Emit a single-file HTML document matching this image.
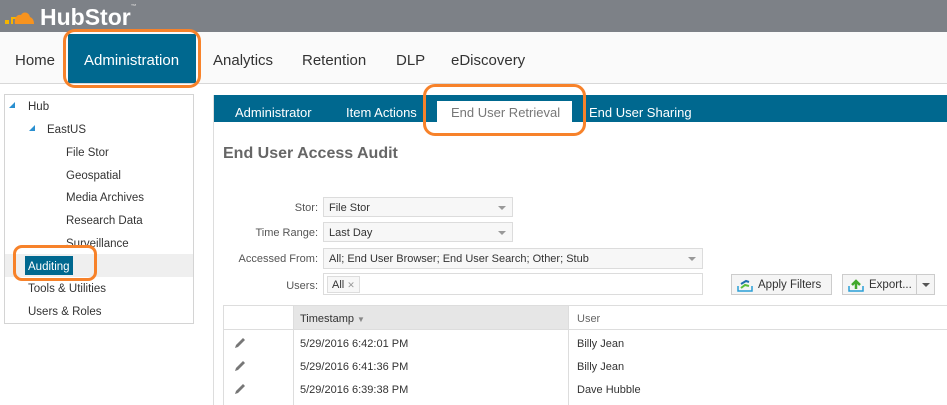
<!DOCTYPE html>
<html><head><meta charset="utf-8"><style>
*{margin:0;padding:0;box-sizing:border-box}
body{width:947px;height:405px;overflow:hidden;background:#fff;font-family:"Liberation Sans",sans-serif;color:#333;position:relative;font-size:11px}
.a{position:absolute;white-space:nowrap}
.top{left:0;top:0;width:947px;height:32px;background:#7d8187}
.nav{left:0;top:32px;width:947px;height:52px;background:#fafafa;border-bottom:1px solid #d8d8d8}
.ni{top:52px;font-size:15px;color:#333}
.tree{left:4px;top:94px;width:190px;height:230px;border:1px solid #d4d4d4}
.ti{font-size:11.5px;color:#333}
.tab{font-size:13px;color:#fff;top:105px}
.lbl{font-size:11px;color:#555;text-align:right;width:120px}
.inp{border:1px solid #dcdcdc;background:#f7f7f7;font-size:11px;padding:4px 5px 2px;color:#333}
.dd{position:absolute;right:6px;top:8px;border:4px solid transparent;border-top:4px solid #999;border-bottom:0}
.btn{border:1px solid #ccc;background:#f5f5f5;font-size:11.5px;color:#333;height:21px}
.row{font-size:11px;color:#333}
</style></head><body>
<div class="a top"></div>
<svg class="a" style="left:4px;top:8px" width="30" height="18" viewBox="0 0 30 18">
<rect x="1" y="12" width="4" height="4" fill="#f5b400"/><path d="M7 16V9h7v2H9v5z" fill="#f5b400"/>
<path d="M11 16 C10 10 13 6 17 7 C19 3 25 4 26 9 C29 10 30 13 30 16 Z" fill="#f7931e"/></svg>
<div class="a" style="left:40px;top:4px;font-size:23px;font-weight:bold;color:#fff">HubStor<span style="font-size:6px;vertical-align:top;color:#ccc">™</span></div>
<div class="a nav"></div>
<div class="a ni" style="left:15px">Home</div>
<div class="a" style="left:68px;top:34px;width:128px;height:49px;background:#00688f"></div>
<div class="a" style="left:63px;top:29px;width:138px;height:59px;border:3px solid #f7822a;border-radius:12px"></div>
<div class="a ni" style="left:84px;color:#fff">Administration</div>
<div class="a ni" style="left:213px">Analytics</div>
<div class="a ni" style="left:302px">Retention</div>
<div class="a ni" style="left:396px">DLP</div>
<div class="a ni" style="left:451px">eDiscovery</div>

<div class="a tree"></div>
<div class="a" style="left:9px;top:102px;width:0;height:0;border-left:6px solid transparent;border-bottom:6px solid #2a8fd0"></div>
<div class="a ti" style="left:28px;top:101px">Hub</div>
<div class="a" style="left:29px;top:125px;width:0;height:0;border-left:6px solid transparent;border-bottom:6px solid #2a8fd0"></div>
<div class="a ti" style="left:47px;top:124px">EastUS</div>
<div class="a ti" style="left:66px;top:147px">File Stor</div>
<div class="a ti" style="left:66px;top:170px">Geospatial</div>
<div class="a ti" style="left:66px;top:192px">Media Archives</div>
<div class="a ti" style="left:66px;top:215px">Research Data</div>
<div class="a ti" style="left:66px;top:238px">Surveillance</div>
<div class="a" style="left:5px;top:254px;width:188px;height:23px;background:#efefef"></div>
<div class="a" style="left:25px;top:256px;width:48px;height:19px;background:#00688f"></div>
<div class="a ti" style="left:28px;top:261px;color:#fff">Auditing</div>
<div class="a" style="left:13px;top:245px;width:84px;height:36px;border:3px solid #f7822a;border-radius:9px"></div>
<div class="a ti" style="left:28px;top:283px">Tools &amp; Utilities</div>
<div class="a ti" style="left:28px;top:306px">Users &amp; Roles</div>

<div class="a" style="left:213px;top:95px;width:1px;height:310px;background:#ddd"></div>
<div class="a" style="left:214px;top:95px;width:733px;height:27px;background:#00688f"></div>
<div class="a tab" style="left:235px">Administrator</div>
<div class="a tab" style="left:346px">Item Actions</div>
<div class="a" style="left:437px;top:101px;width:135px;height:21px;background:#fff"></div>
<div class="a tab" style="left:451px;color:#777">End User Retrieval</div>
<div class="a tab" style="left:589px">End User Sharing</div>
<div class="a" style="left:423px;top:84px;width:163px;height:52px;border:3px solid #f7822a;border-radius:12px"></div>
<div class="a" style="left:223px;top:145px;font-size:16px;font-weight:bold;color:#666">End User Access Audit</div>

<div class="a lbl" style="left:198px;top:202px">Stor:</div>
<div class="a inp" style="left:323px;top:197px;width:190px;height:20px">File Stor<span class="dd"></span></div>
<div class="a lbl" style="left:198px;top:227px">Time Range:</div>
<div class="a inp" style="left:323px;top:222px;width:190px;height:20px">Last Day<span class="dd"></span></div>
<div class="a lbl" style="left:198px;top:253px">Accessed From:</div>
<div class="a inp" style="left:323px;top:248px;width:380px;height:21px">All; End User Browser; End User Search; Other; Stub<span class="dd"></span></div>
<div class="a lbl" style="left:198px;top:280px">Users:</div>
<div class="a inp" style="left:323px;top:273px;width:380px;height:22px;background:#fff;padding:2px 3px"><span style="display:inline-block;border:1px solid #ddd;background:#f7f7f7;padding:2px 4px 1px">All <span style="color:#999;font-size:9px">✕</span></span></div>
<div class="a btn" style="left:731px;top:274px;width:101px"><svg class="a" style="left:5px;top:3px" width="16" height="14"><path d="M1 8v5h14V8" stroke="#2a9fd6" fill="none" stroke-width="1.5"/><path d="M4 10l4-3 4 1" stroke="#5bbf3a" stroke-width="2" fill="none"/><path d="M4 6l5-3 3 1" stroke="#1f6fae" stroke-width="2" fill="none"/></svg><span class="a" style="left:26px;top:4px">Apply Filters</span></div>
<div class="a btn" style="left:842px;top:274px;width:93px"><svg class="a" style="left:5px;top:3px" width="16" height="14"><path d="M1 8v5h14V8" stroke="#2a9fd6" fill="none" stroke-width="1.5"/><path d="M8 11V4M4 7l4-4 4 4" stroke="#43a82c" stroke-width="2.5" fill="none"/></svg><span class="a" style="left:26px;top:4px">Export...</span><span class="a" style="left:73px;top:0;width:1px;height:19px;background:#ccc"></span><span class="a" style="left:79px;top:8px;border:4px solid transparent;border-top:4px solid #555;border-bottom:0"></span></div>

<div class="a" style="left:223px;top:305px;width:724px;height:100px;border-left:1px solid #ddd;border-top:1px solid #ddd"></div>
<div class="a" style="left:293px;top:306px;width:275px;height:24px;background:#e6e6e6"></div>
<div class="a" style="left:224px;top:329px;width:723px;height:1px;background:#ddd"></div>
<div class="a" style="left:293px;top:306px;width:1px;height:99px;background:#ddd"></div>
<div class="a" style="left:568px;top:306px;width:1px;height:99px;background:#ddd"></div>
<div class="a row" style="left:300px;top:313px">Timestamp <span style="color:#888;font-size:8px">▼</span></div>
<div class="a row" style="left:577px;top:313px;color:#666">User</div>
<svg class="a" style="left:234px;top:337px" width="12" height="12"><path d="M1 11l1-3 7-7 2 2-7 7z" fill="#777"/></svg>
<div class="a row" style="left:300px;top:338px">5/29/2016 6:42:01 PM</div>
<div class="a row" style="left:577px;top:338px">Billy Jean</div>
<svg class="a" style="left:234px;top:360px" width="12" height="12"><path d="M1 11l1-3 7-7 2 2-7 7z" fill="#777"/></svg>
<div class="a row" style="left:300px;top:361px">5/29/2016 6:41:36 PM</div>
<div class="a row" style="left:577px;top:361px">Billy Jean</div>
<svg class="a" style="left:234px;top:383px" width="12" height="12"><path d="M1 11l1-3 7-7 2 2-7 7z" fill="#777"/></svg>
<div class="a row" style="left:300px;top:384px">5/29/2016 6:39:38 PM</div>
<div class="a row" style="left:577px;top:384px">Dave Hubble</div>
</body></html>
